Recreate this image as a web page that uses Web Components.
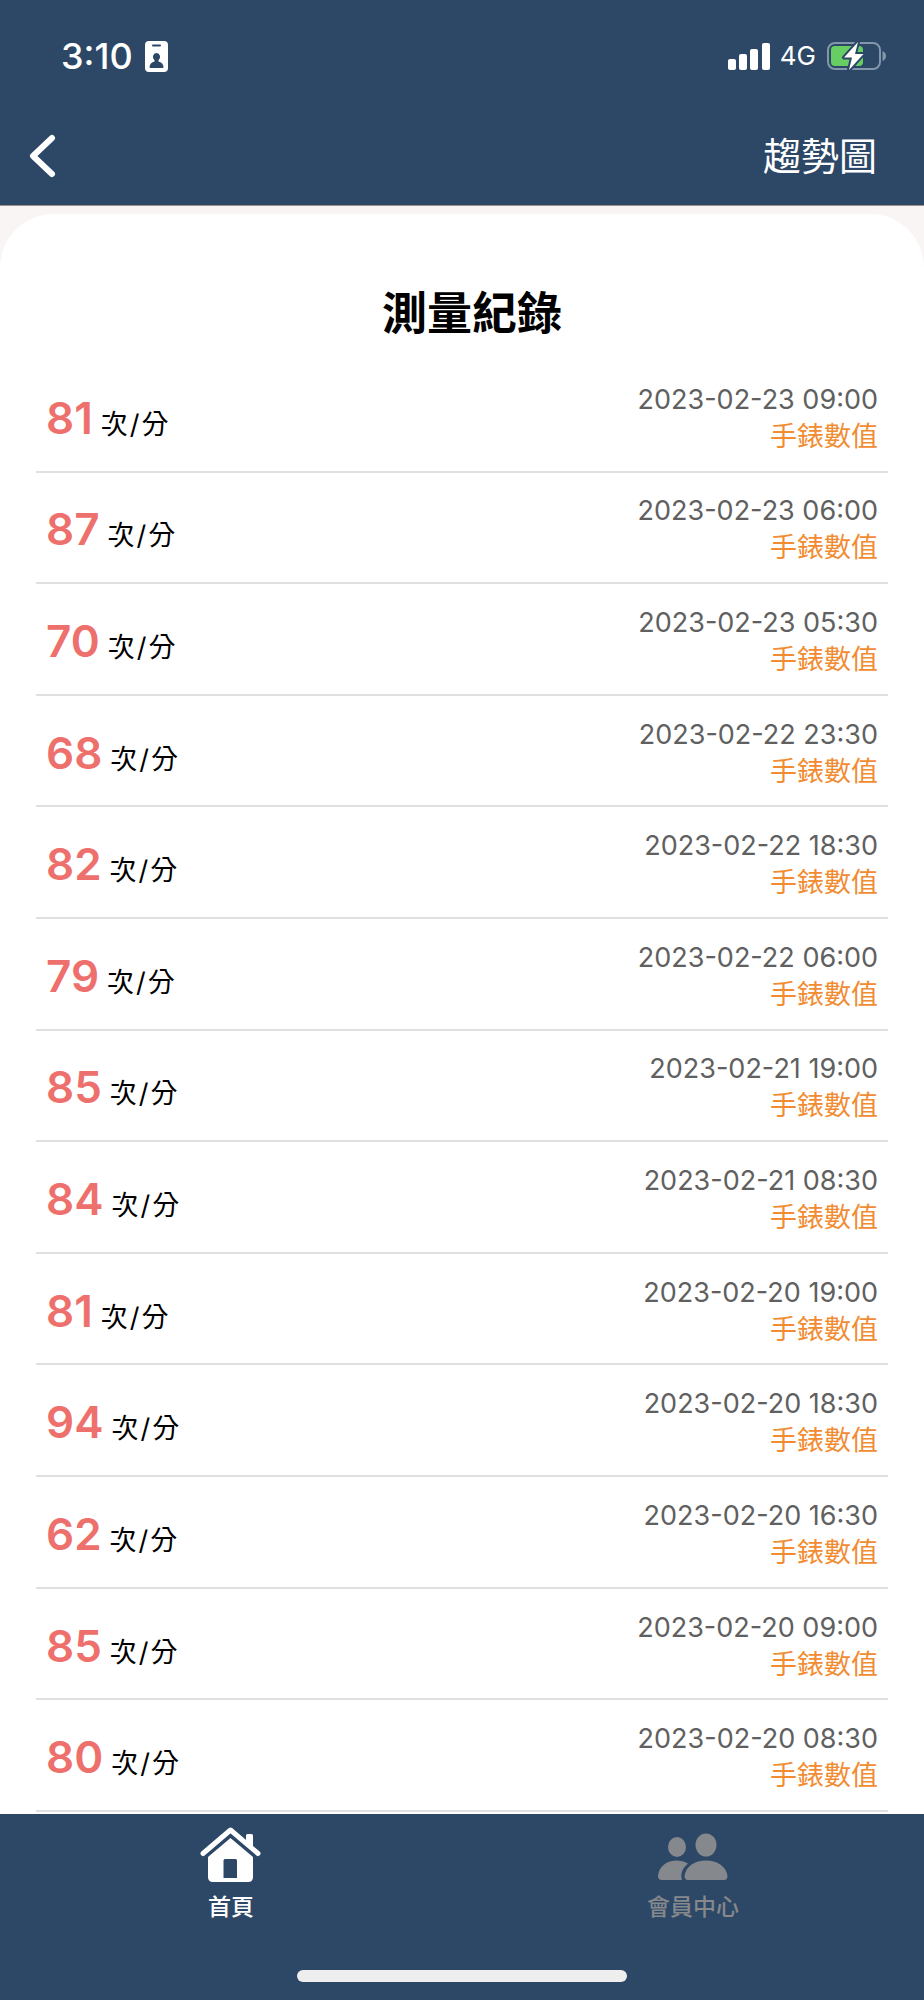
<!DOCTYPE html>
<html lang="zh-Hant">
<head>
<meta charset="utf-8">
<meta name="viewport" content="width=device-width, initial-scale=1">
<title>測量紀錄</title>
<style>
  body { margin: 0; background: #f9f5f4; font-family: Inter, "Noto Sans CJK TC", sans-serif; color: #000; }
</style>
</head>
<body>
<record-app></record-app>

<template id="status-bar">
  <style>
    :host { display: flex; align-items: center; justify-content: space-between; height: 100px; padding: 6px 37px 0 61px; color: #fff; }
    .group { display: flex; align-items: center; }
    .time { font-size: 36px; font-weight: 500; line-height: 40px; margin-right: 12px; }
    .net { font-size: 26px; font-weight: 400; line-height: 32px; margin: 0 11px 0 10px; }
    svg { display: block; }
  </style>
  <div class="group">
    <span class="time">3:10</span>
    <svg width="23" height="31" viewBox="0 0 23 31"><path fill="#fff" fill-rule="evenodd" d="M4 0h15a4 4 0 0 1 4 4v23a4 4 0 0 1-4 4H4a4 4 0 0 1-4-4V4a4 4 0 0 1 4-4zM8 3.500a1 1 0 0 0 0 2h7a1 1 0 0 0 0-2zM11.500 12a3.700 4 0 0 0-2 7.300v1.200C6.500 21.300 4.500 23.500 4.500 26q0 1 1 1h12q1 0 1-1c0-2.500-2-4.700-5-5.500v-1.200a3.700 4 0 0 0-2-7.300z"/></svg>
  </div>
  <div class="group">
    <svg width="42" height="27" viewBox="0 0 42 27" fill="#fff"><rect y="16" width="8" height="11" rx="2"/><rect x="11" y="11" width="8" height="16" rx="2"/><rect x="22" y="6" width="8" height="21" rx="2"/><rect x="34" width="8" height="27" rx="2"/></svg>
    <span class="net">4G</span>
    <svg width="60" height="30" viewBox="0 0 60 30">
      <rect x="1" y="2" width="52" height="26" rx="7" fill="none" stroke="#8496aa" stroke-width="2"/>
      <path d="M55.500 10q3.500 1.500 3.500 5t-3.500 5z" fill="#8496aa"/>
      <rect x="4" y="5" width="32" height="20" rx="4" fill="#66ce63"/>
      <path d="M31 1 17 16.500h8L22 29 36.500 13H28z" fill="#fff" stroke="#2c4866" stroke-width="4" stroke-linejoin="round" paint-order="stroke"/>
    </svg>
  </div>
</template>

<template id="title-bar">
  <style>
    :host { display: flex; align-items: center; justify-content: space-between; height: 99px; padding: 0 47px 0 28px; border-bottom: 1px solid #98918f; color: #fff; }
    button { border: 0; padding: 0; background: none; color: inherit; font: inherit; cursor: pointer; }
    .action { font-size: 38px; line-height: 48px; font-weight: 400; }
    svg { display: block; }
  </style>
  <button type="button" aria-label="返回"><svg width="30" height="44" viewBox="0 0 30 44"><path d="M24 4 5 22l19 18" fill="none" stroke="#fff" stroke-width="6" stroke-linecap="round" stroke-linejoin="round"/></svg></button>
  <button type="button" class="action"><slot></slot></button>
</template>

<template id="record-row">
  <style>
    :host { display: flex; flex: 1 0 auto; box-sizing: border-box; align-items: center; justify-content: space-between; padding: 4px 10px 0; min-height: 100px; border-bottom: 2px solid #e0e0e0; }
    .reading { display: flex; align-items: baseline; gap: 8px; padding-top: 7px; line-height: 48px; }
    .value { font-size: 44px; font-weight: 600; color: #ee706d; }
    .unit { font-size: 27px; }
    .per { padding: 0 2px; }
    .source { display: flex; flex-direction: column; align-items: flex-end; line-height: 37px; }
    time { font-size: 27px; color: #606060; }
    .device { font-size: 27px; color: #f28c32; }
  </style>
  <div class="reading"><span class="value"></span><span class="unit">次<span class="per">/</span>分</span></div>
  <div class="source"><time></time><span class="device">手錶數值</span></div>
</template>

<template id="tab-link">
  <style>
    :host { display: block; flex: 1; }
    a { display: flex; flex-direction: column; align-items: center; gap: 8px; color: var(--tint); text-decoration: none; font-size: 23px; line-height: 32px; font-weight: 500; }
  </style>
  <a href="#"><slot name="icon"></slot><span><slot></slot></span></a>
</template>

<template id="tab-bar">
  <style>
    :host { display: block; height: 186px; background: #2c4866; }
    nav { display: flex; padding-top: 13px; }
    svg { display: block; }
    .on { --tint: #fff; }
    .off { --tint: #85888c; }
    .home { width: 330px; max-width: 60%; height: 12px; border-radius: 6px; background: #eee; margin: 47px auto 0; }
  </style>
  <nav>
    <tab-link class="on">
      <svg slot="icon" width="62" height="56" viewBox="0 0 62 56"><path d="M3 26.500 30.500 3 58 26.500" fill="none" stroke="currentColor" stroke-width="5" stroke-linecap="round" stroke-linejoin="round"/><path d="M46 15V8.500q0-1.500 1.500-1.500h4q1.500 0 1.500 1.500V22z" fill="currentColor"/><path d="M30.500 11 53 30v20q0 5-5 5H13q-5 0-5-5V30zM25 32q-1.500 0-1.500 1.500V51H37V33.500q0-1.500-1.500-1.500z" fill="currentColor" fill-rule="evenodd"/></svg>
      首頁
    </tab-link>
    <tab-link class="off">
      <svg slot="icon" width="70" height="56" viewBox="0 0 70 56" fill="currentColor"><ellipse cx="19" cy="20" rx="9" ry="10"/><ellipse cx="48" cy="18" rx="10.500" ry="11.500"/><path d="M4 53q-4 0-4-4C1 39 9 33.500 19 33.500q6 0 11 3C25 41 22 46 24 53z"/><path d="M30 53q-3.500 0-3.500-4C28 39 37 33.500 48 33.500S68 39 69.500 49q0 4-3.500 4z"/></svg>
      會員中心
    </tab-link>
  </nav>
  <div class="home"></div>
</template>

<template id="record-app">
  <style>
    :host { display: flex; flex-direction: column; min-height: 100vh; }
    header { background: #2c4866; }
    main { display: flex; flex-direction: column; flex: 1; margin-top: 8px; padding: 70px 36px 2px; border-radius: 54px 54px 0 0; background: #fff; }
    h1 { margin: 0 0 17px; padding-left: 20px; text-align: center; font-size: 45px; line-height: 60px; font-weight: 700; }
    .list { display: flex; flex: 1; flex-direction: column; }
  </style>
  <header><status-bar></status-bar><title-bar>趨勢圖</title-bar></header>
  <main>
    <h1>測量紀錄</h1>
    <div class="list" role="list"></div>
  </main>
  <tab-bar></tab-bar>
</template>

<script>
  class Base extends HTMLElement {
    constructor() {
      super();
      this.attachShadow({ mode: "open" }).append(
        document.getElementById(this.localName).content.cloneNode(true));
    }
  }
  const records = [
    [81, "2023-02-23 09:00"], [87, "2023-02-23 06:00"], [70, "2023-02-23 05:30"],
    [68, "2023-02-22 23:30"], [82, "2023-02-22 18:30"], [79, "2023-02-22 06:00"],
    [85, "2023-02-21 19:00"], [84, "2023-02-21 08:30"], [81, "2023-02-20 19:00"],
    [94, "2023-02-20 18:30"], [62, "2023-02-20 16:30"], [85, "2023-02-20 09:00"],
    [80, "2023-02-20 08:30"]
  ];
  customElements.define("status-bar", class extends Base {});
  customElements.define("title-bar", class extends Base {});
  customElements.define("tab-link", class extends Base {});
  customElements.define("tab-bar", class extends Base {});
  customElements.define("record-row", class extends Base {
    connectedCallback() {
      this.setAttribute("role", "listitem");
      this.shadowRoot.querySelector(".value").textContent = this.getAttribute("value");
      const time = this.shadowRoot.querySelector("time");
      time.textContent = time.dateTime = this.getAttribute("time");
    }
  });
  customElements.define("record-app", class extends Base {
    connectedCallback() {
      const list = this.shadowRoot.querySelector(".list");
      for (const [value, time] of records) {
        const row = document.createElement("record-row");
        row.setAttribute("value", value);
        row.setAttribute("time", time);
        list.append(row);
      }
    }
  });
</script>
</body>
</html>
